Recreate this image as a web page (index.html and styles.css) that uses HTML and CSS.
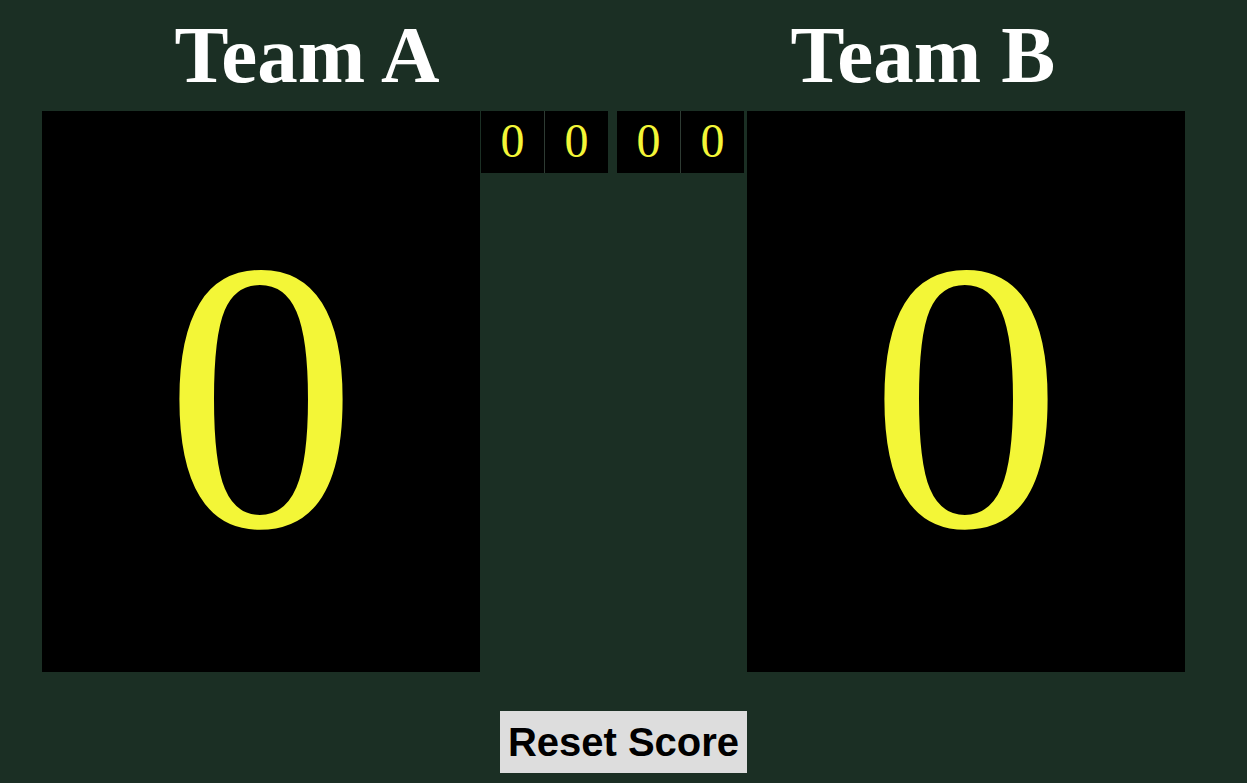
FILE: index.html
```html
<!DOCTYPE html>
<html lang="en">
<head>
<meta charset="utf-8">
<title>Scoreboard</title>
<link rel="stylesheet" href="styles.css">
</head>
<body>
<header class="titles">
  <h1 class="team-name">Team A</h1>
  <h1 class="team-name">Team B</h1>
</header>
<main class="board">
  <section class="score-panel"><span class="score">0</span></section>
  <section class="middle">
    <div class="digits">
      <div class="digit-group">
        <div class="digit">0</div>
        <div class="digit">0</div>
      </div>
      <div class="digit-group">
        <div class="digit">0</div>
        <div class="digit">0</div>
      </div>
    </div>
  </section>
  <section class="score-panel"><span class="score">0</span></section>
</main>
<div class="actions">
  <button class="reset" type="button">Reset Score</button>
</div>
</body>
</html>
```

FILE: styles.css
```css
html, body {
  margin: 0;
  padding: 0;
}

body {
  background: #1b2f24;
  font-family: "Liberation Serif", "Times New Roman", serif;
  width: 1247px;
  height: 783px;
  overflow: hidden;
}

.titles {
  display: grid;
  grid-template-columns: 614px 618px;
  padding-top: 10px;
}

.team-name {
  margin: 0;
  text-align: center;
  color: #ffffff;
  font-weight: bold;
  font-size: 81px;
  line-height: 91px;
}

.board {
  display: flex;
  padding-left: 42px;
  margin-top: 10px;
}

.score-panel {
  width: 438px;
  height: 561px;
  background: #000000;
  display: flex;
  align-items: center;
  justify-content: center;
}

.score {
  color: #f3f637;
  font-size: 385px;
  line-height: 1;
  padding-top: 9px;
}

.middle {
  width: 267px;
  padding-left: 1px;
  box-sizing: border-box;
}

.digits {
  display: flex;
  gap: 9px;
}

.digit-group {
  display: flex;
  gap: 1px;
  background: #2e3b33;
}

.digit {
  width: 63px;
  height: 62px;
  background: #000000;
  color: #f3f637;
  font-size: 48px;
  line-height: 60px;
  text-align: center;
}

.actions {
  display: flex;
  justify-content: center;
  margin-top: 39px;
}

.reset {
  font-family: "Liberation Sans", Arial, sans-serif;
  font-weight: bold;
  font-size: 40px;
  line-height: 46px;
  padding: 8px 8px;
  border: none;
  background: #dddddd;
  color: #000000;
  margin: 0;
  white-space: nowrap;
}
```
